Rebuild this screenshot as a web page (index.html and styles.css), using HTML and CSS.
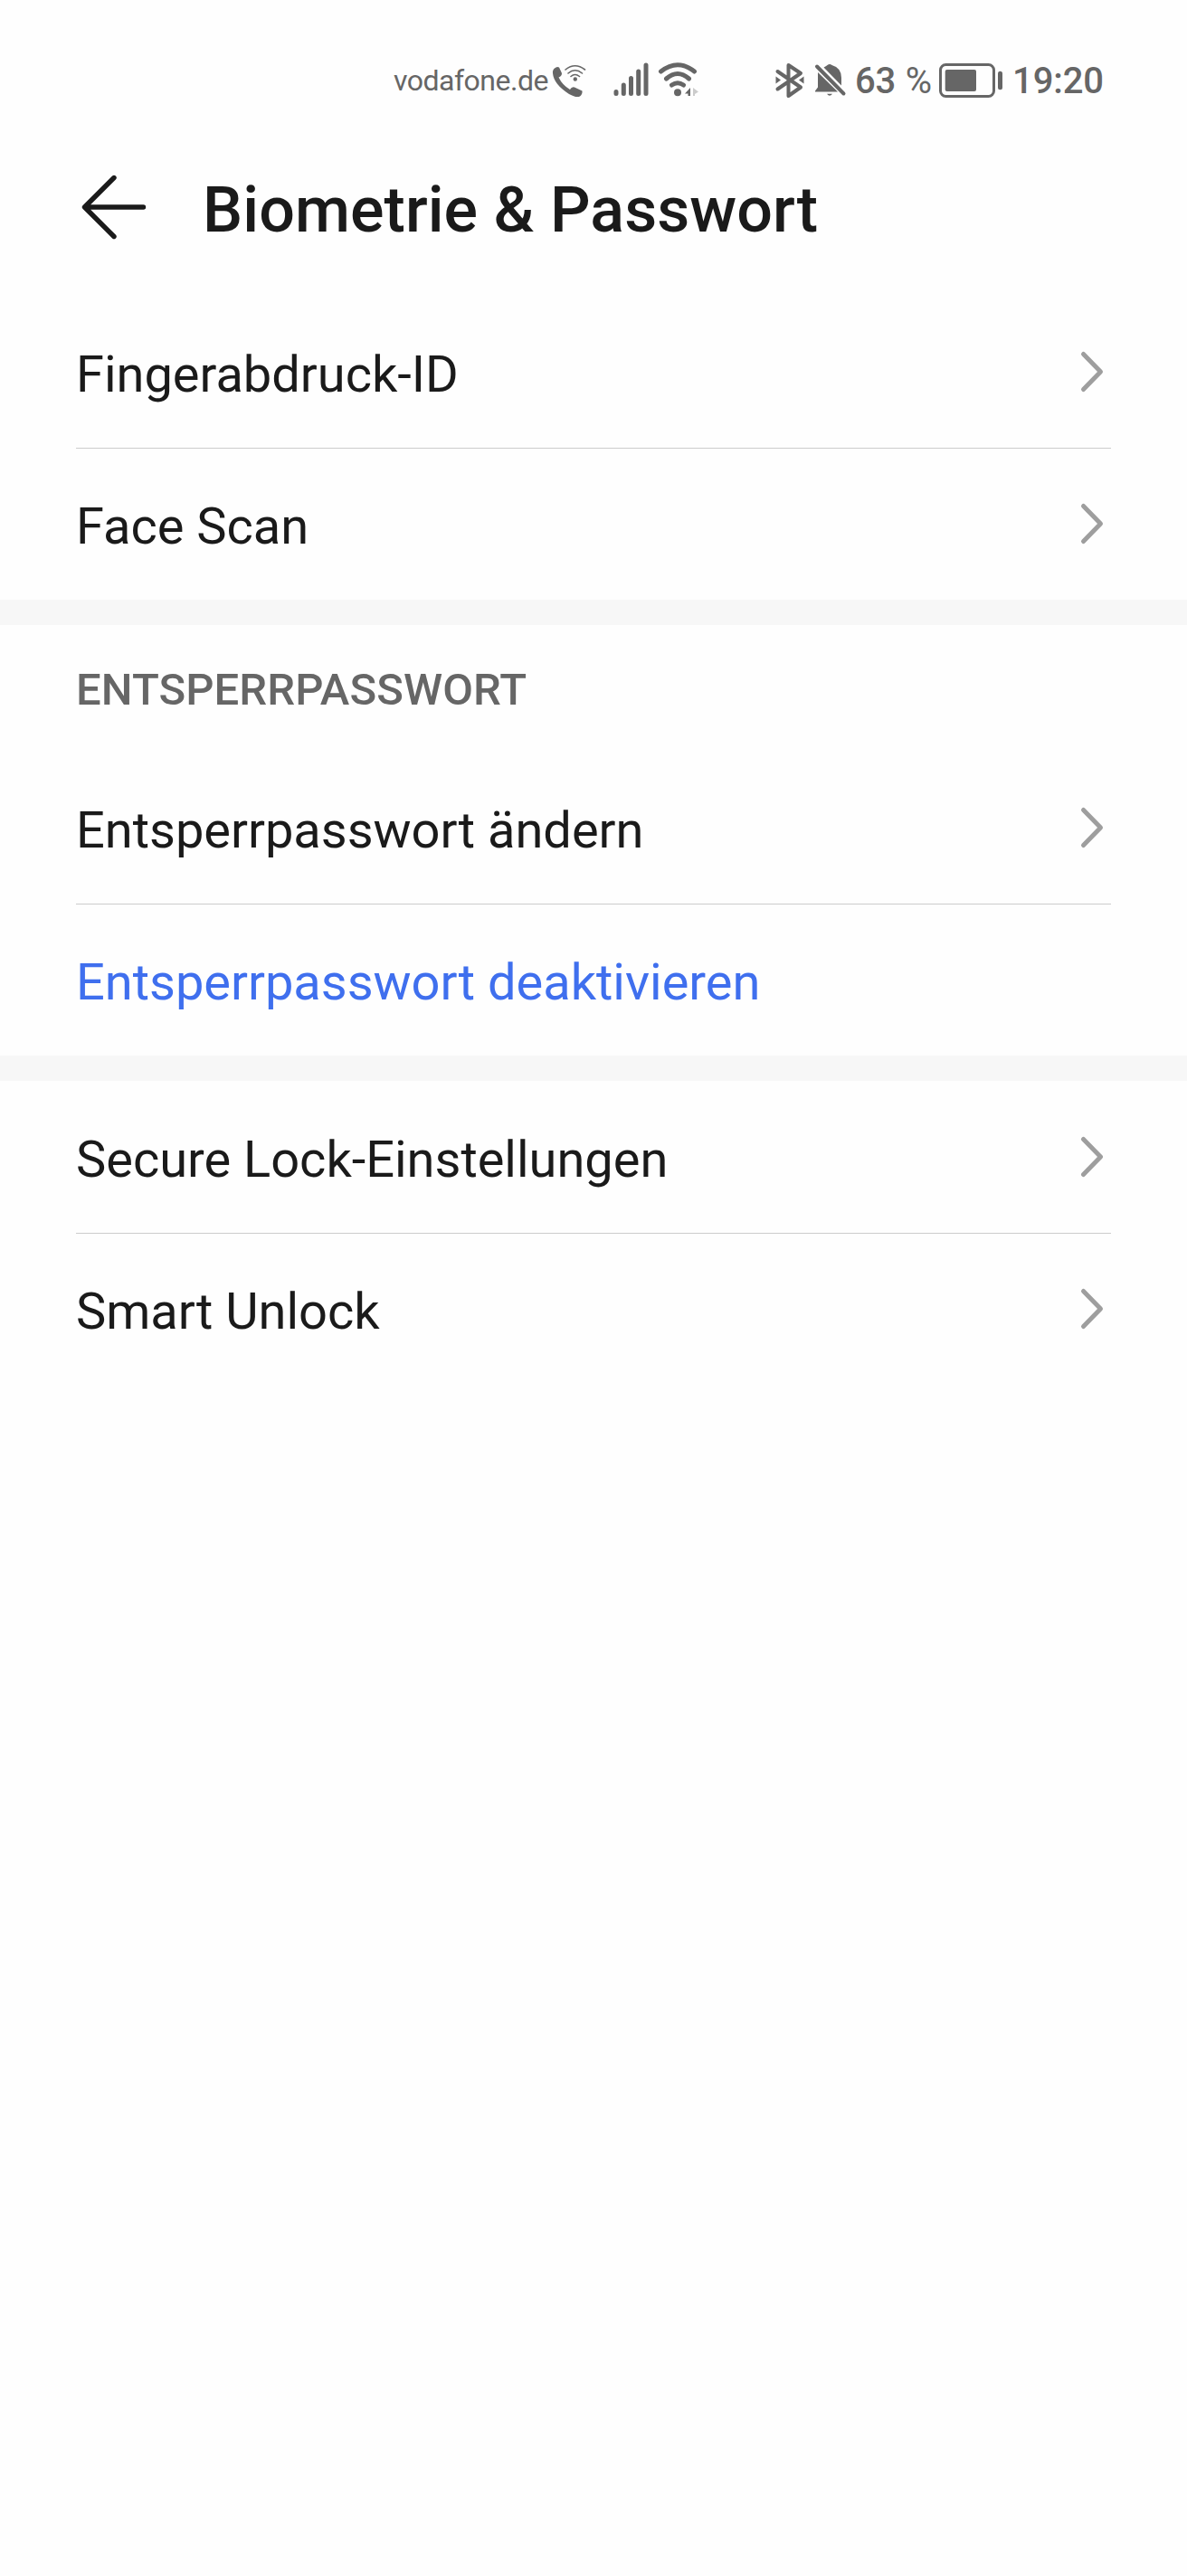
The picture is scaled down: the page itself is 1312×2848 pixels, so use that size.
FILE: index.html
```html
<!DOCTYPE html>
<html lang="de">
<head>
<meta charset="utf-8">
<title>Biometrie &amp; Passwort</title>
<link rel="stylesheet" href="styles.css">
</head>
<body>
<div class="status">
  <span class="carrier">vodafone.de</span>
  <svg class="icon call" width="40" height="40" viewBox="609 69 40 40">
    <path class="fill" d="M613 75.500Q615.500 73 618 74.500L621 81Q621 84 617.500 85.500Q621.500 94 630 99Q632 95.500 635 96.500L643.500 100.500Q644 104 641 106.500Q637 108.500 629 104Q612 93 611 81Q610.500 77.500 613 75.500Z"/>
    <path class="line w15" d="M625 77Q635.500 68.500 646.500 77M628 81Q635.500 74.500 643.500 81M631 84.500Q635.500 80.500 640.500 84.500"/>
    <circle class="fill" cx="635.800" cy="87.500" r="2.200"/>
  </svg>
  <svg class="icon signal" width="40" height="40" viewBox="678 68 40 40">
    <path class="line w5" d="M681 101.500V103.500M689.300 94V103.500M697.500 86.500V103.500M705.700 79V103.500M714 72V103.500"/>
  </svg>
  <svg class="icon wifi" width="48" height="40" viewBox="726 68 48 40">
    <path class="line w5" d="M730.500 79Q749 64.500 767.500 79M736.500 87Q749 76 761.500 87M742.500 94Q749 89.500 755.500 94"/>
    <circle class="fill" cx="749" cy="102.300" r="4"/>
    <path class="fill" d="M763 97V106H760.500V103.500H757Z"/>
    <path class="faint" d="M766 97L772 101.500L768 104V106H766Z"/>
  </svg>
  <svg class="icon bt" width="36" height="40" viewBox="855 69 36 40">
    <path class="line w4" d="M859.500 79L885 96.500L871.500 106V72L885 81L859.500 98.500"/>
    <path class="fill" d="M857.500 84.500V92.500L863 88.500ZM888.500 84.500V92.500L883 88.500Z"/>
  </svg>
  <svg class="icon bell" width="38" height="40" viewBox="899 69 38 40">
    <path class="fill" d="M904 80L926 101.500H901V100.500L904 96.500ZM910.500 74.500Q913 73 914.500 72Q917 70 919.500 72Q930 75 930 86V94.500ZM914 103.700H920Q917 108 914 103.700Z"/>
    <path class="line w4" d="M903 73.500L932.500 103.500"/>
  </svg>
  <span class="pct">63 <span class="unit">%</span></span>
  <svg class="icon batt" width="74" height="40" viewBox="1036 69 74 40">
    <rect class="line w3" x="1039.500" y="71.500" width="59" height="35" rx="6"/>
    <rect class="fill" x="1044.700" y="77" width="34.300" height="24" rx="2"/>
    <rect class="fill" x="1103" y="78.700" width="5" height="20.600" rx="2.500"/>
  </svg>
  <span class="time">19:20</span>
</div>
<header class="head">
  <svg class="back" width="76" height="76" viewBox="0 0 76 76"><path d="M38 5.500L5.500 38L38 70.500M6 38H70.500"/></svg>
  <h1>Biometrie &amp; Passwort</h1>
</header>
<main>
  <section>
    <div class="row"><span>Fingerabdruck-ID</span><svg class="chevron" width="28" height="48" viewBox="0 0 28 48"><path d="M4.500 4.500L23.500 24L4.500 43.500"/></svg></div>
    <div class="row"><span>Face Scan</span><svg class="chevron" width="28" height="48" viewBox="0 0 28 48"><path d="M4.500 4.500L23.500 24L4.500 43.500"/></svg></div>
  </section>
  <section>
    <h2>ENTSPERRPASSWORT</h2>
    <div class="row"><span>Entsperrpasswort ändern</span><svg class="chevron" width="28" height="48" viewBox="0 0 28 48"><path d="M4.500 4.500L23.500 24L4.500 43.500"/></svg></div>
    <div class="row link"><span>Entsperrpasswort deaktivieren</span></div>
  </section>
  <section>
    <div class="row"><span>Secure Lock-Einstellungen</span><svg class="chevron" width="28" height="48" viewBox="0 0 28 48"><path d="M4.500 4.500L23.500 24L4.500 43.500"/></svg></div>
    <div class="row"><span>Smart Unlock</span><svg class="chevron" width="28" height="48" viewBox="0 0 28 48"><path d="M4.500 4.500L23.500 24L4.500 43.500"/></svg></div>
  </section>
</main>
</body>
</html>
```
FILE: styles.css
```css
* { box-sizing: border-box; }
body { margin: 0; font-family: Roboto, sans-serif; color: #1a1a1a; background: #fefefe; }

.status { display: flex; height: 130px; padding: 68px 0 0 435px; color: #666; line-height: 44px; white-space: pre; }
.carrier { width: 174px; margin-top: -1px; font-size: 32px; letter-spacing: -0.5px; }
.pct { width: 91px; margin-left: 8px; font-size: 40px; font-weight: 500; letter-spacing: -0.2px; }
.unit { margin-left: 1px; font-weight: 400; letter-spacing: 0; }
.time { margin-left: 9px; font-size: 40px; font-weight: 500; letter-spacing: -0.1px; }

.icon { flex: none; display: block; margin-top: 1px; }
.signal { margin: 0 0 0 29px; }
.wifi { margin: 0 0 0 8px; }
.bt { margin-left: 81px; }
.bell { margin-left: 8px; }
.fill { fill: #666; }
.faint { fill: #ccc; }
.line { fill: none; stroke: #666; stroke-linecap: round; stroke-linejoin: round; }
.w15 { stroke-width: 1.6; }
.w3 { stroke-width: 3; }
.w4 { stroke-width: 4; }
.w5 { stroke-width: 5; }

.head { display: flex; height: 197px; padding: 61px 0 0 88px; }
.back { flex: none; fill: none; stroke: #1a1a1a; stroke-width: 5.4; stroke-linecap: round; stroke-linejoin: round; }
h1 { margin: 0 0 0 60px; font-size: 70px; font-weight: 500; line-height: 82px; letter-spacing: 0.06px; }

section + section { border-top: 28px solid #f7f7f7; }
h2 { height: 140px; margin: 0; padding: 42px 84px 0; font-size: 49px; font-weight: 500; line-height: 60px; letter-spacing: 0.08px; color: #666; }
.row { display: flex; align-items: center; justify-content: space-between; height: 168px; margin: 0 84px; padding-right: 7px; font-size: 56px; letter-spacing: -0.02px; }
.row + .row { box-shadow: inset 0 1px #ccc; }
.row span { padding-top: 5px; }
.link { color: #3f6fee; }
.chevron { flex: none; fill: none; stroke: #9e9e9e; stroke-width: 5; stroke-linecap: round; stroke-linejoin: round; }
```
